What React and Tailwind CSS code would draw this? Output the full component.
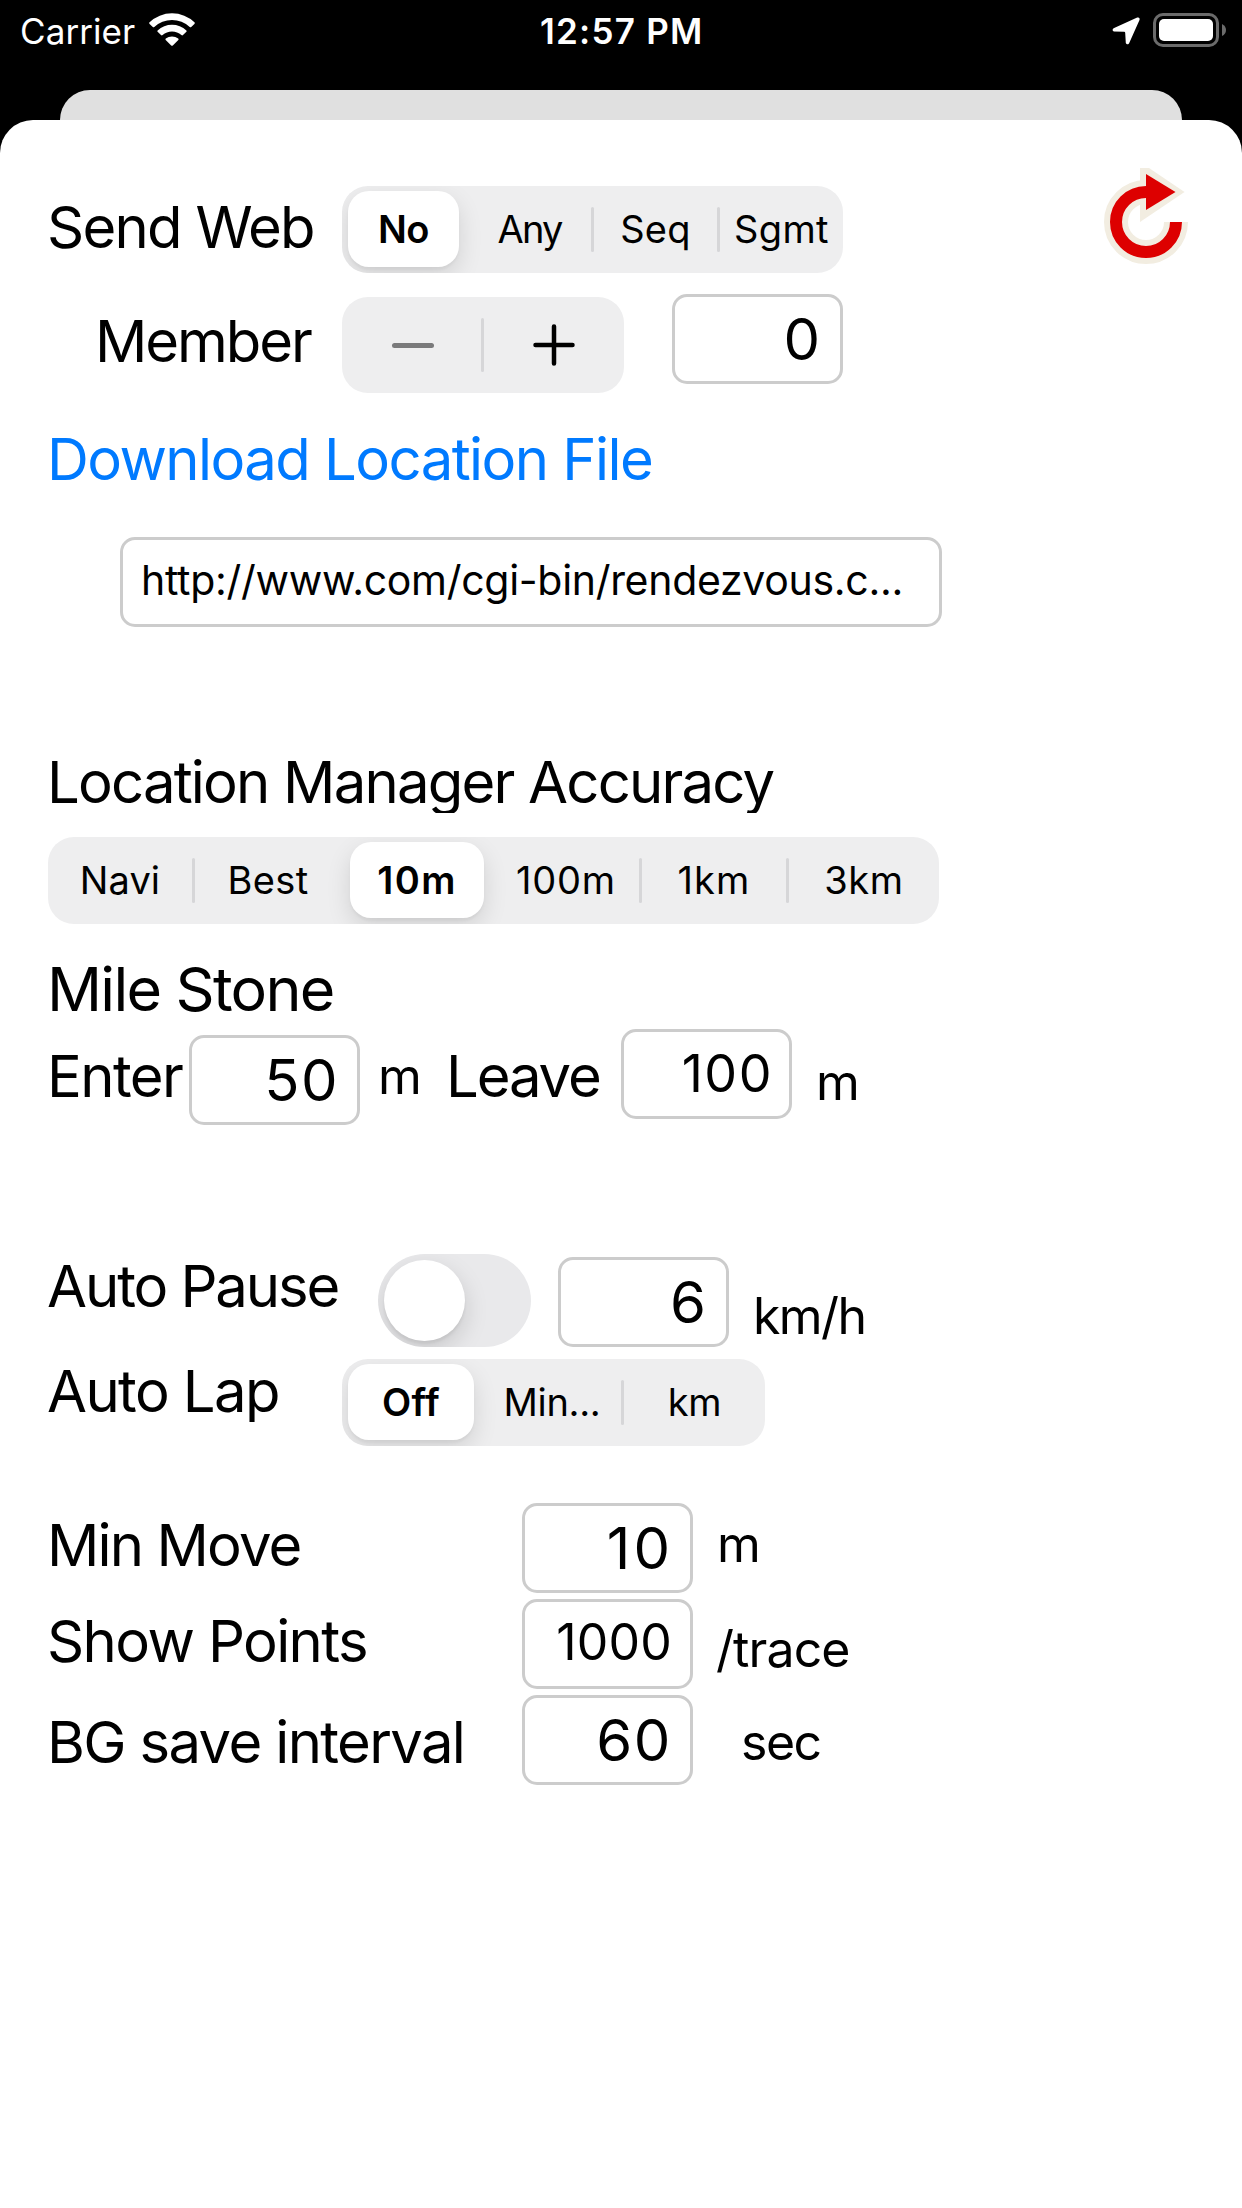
import React from "react";

const LABEL = "shrink-0 whitespace-pre text-[58px] leading-[60px]";
const UNIT = "shrink-0 whitespace-pre text-[50px] leading-[60px]";

function Segmented({ items, selected, className }) {
  return (
    <div className={`flex h-[87px] shrink-0 overflow-hidden rounded-[26px] bg-[#eeeeef] ${className}`}>
      {items.map((item, i) => {
        const isSelected = i === selected;
        const last = i === items.length - 1;
        const divider = !last && !isSelected && i + 1 !== selected;
        return (
          <div key={item.text} className={`flex shrink-0 ${item.width}`}>
            <div className="flex min-w-0 flex-1 items-stretch justify-center px-[6px] pt-[5px] pb-[6px]">
              <div
                className={`flex flex-1 justify-center whitespace-pre text-[38px] leading-[76px] ${item.tracking} ${
                  isSelected
                    ? "rounded-[21px] bg-white font-[560] shadow-[0_9px_24px_rgba(0,0,0,0.12),0_3px_3px_rgba(0,0,0,0.04)]"
                    : ""
                }`}
              >
                {item.text}
              </div>
            </div>
            {!last && (
              <div className={`mt-[21px] h-[45px] w-[3px] shrink-0 rounded-full ${divider ? "bg-[#d6d6d8]" : ""}`} />
            )}
          </div>
        );
      })}
    </div>
  );
}

function Field({ value, className }) {
  return (
    <div
      className={`flex h-[90px] w-[171px] shrink-0 justify-end whitespace-pre rounded-[15px] border-[3px] border-[#cccccc] bg-white ${className}`}
    >
      {value}
    </div>
  );
}

function StatusBar() {
  return (
    <div className="flex h-[90px] justify-between px-[20px] text-[35px] leading-[62px] text-white">
      <div className="flex w-[520px]">
        <span className="w-[129px] tracking-[0.08px]">Carrier</span>
        <svg className="mt-[13px] h-[34px] w-[46px]" viewBox="149 13 46 34" fill="white">
          <path d="M149.3 22.4A33 33 0 0 1 194.7 22.4Q195 23.2 194.4 23.9L191.2 27Q190.4 27.5 189.7 26.9A26 26 0 0 0 154.3 26.9Q153.6 27.5 152.8 27L149.6 23.9Q149 23.2 149.3 22.4Z" />
          <path d="M157.6 30.4A21.3 21.3 0 0 1 186.4 30.4Q187 31.1 186.4 31.8L183 35.1Q182.2 35.7 181.4 35.1A14 14 0 0 0 162.6 35.1Q161.8 35.7 161 35.1L157.6 31.8Q157 31.1 157.6 30.4Z" />
          <path d="M165.8 38.6A10 10 0 0 1 178.2 38.6Q179 39.3 178.3 40L172.8 45.5Q172 46.2 171.2 45.5L165.7 40Q165 39.3 165.8 38.6Z" />
        </svg>
      </div>
      <span className="w-[166px] whitespace-pre font-[560] tracking-[1.25px]">12:57 PM</span>
      <div className="flex w-[516px] justify-end">
        <svg className="mt-[12px] -mr-[5px] h-[36px] w-[116px]" viewBox="1111 12 116 36">
          <path
            d="M1137.2 17.6L1113.6 28.2Q1111.4 30.2 1113.8 31.4L1124.2 31.8Q1125.1 31.9 1125.2 32.8L1125.8 43Q1127 45.4 1129 43.4L1139.5 20Q1140.2 17 1137.2 17.6Z"
            fill="white"
          />
          <rect x="1154.5" y="14.5" width="63" height="31" rx="8.5" fill="none" stroke="#6b6b6b" strokeWidth="3" />
          <rect x="1159" y="19" width="54" height="22" rx="5" fill="white" />
          <path d="M1222 24Q1226 26 1226 30Q1226 34 1222 36Z" fill="#6b6b6b" />
        </svg>
      </div>
    </div>
  );
}

function RefreshIcon() {
  return (
    <svg className="h-[96px] w-[84px] shrink-0" viewBox="1104 168 84 96">
      <g fill="none">
        <path d="M1146 192A30 30 0 1 0 1176 222" stroke="#f2ede1" strokeWidth="24" />
        <path d="M1140 168H1149L1184.5 192L1140 222Z" fill="#f2ede1" />
        <path d="M1146 192A30 30 0 1 0 1176 222" stroke="#dd0000" strokeWidth="12" />
        <path d="M1146 174L1175.5 192L1146 210Z" fill="#dd0000" />
      </g>
    </svg>
  );
}

function Stepper() {
  return (
    <div className="mt-[3px] flex h-[96px] w-[282px] shrink-0 rounded-[26px] bg-[#eeeeef]">
      <div className="flex w-[139px] items-center justify-center pl-[3px]">
        <div className="h-[5px] w-[42px] rounded-full bg-[#7a7a7b]" />
      </div>
      <div className="mt-[21px] h-[54px] w-[3px] rounded-full bg-[#d6d6d8]" />
      <div className="flex w-[140px] items-center justify-center">
        <svg className="h-[42px] w-[42px]" viewBox="0 0 42 42" stroke="black" strokeWidth="4.5" strokeLinecap="round">
          <path d="M2.5 21H39.5M21 2.5V39.5" />
        </svg>
      </div>
    </div>
  );
}

export default function App() {
  return (
    <div className="h-[2208px] w-[1242px] overflow-hidden bg-black font-[Inter,sans-serif] text-black">
      <StatusBar />
      <div className="mx-[60px] h-[30px] rounded-t-[30px] bg-[#e0e0e0]" />
      <div className="flex h-[2088px] flex-col rounded-t-[33px] bg-white pt-[48px]">
        <div className="flex h-[105px] items-start pl-[47px]">
          <span className={`${LABEL} mt-[29px] w-[295px] tracking-[-1.73px]`}>Send Web</span>
          <Segmented
            className="mt-[18px] w-[501px]"
            selected={0}
            items={[
              { text: "No", width: "w-[126px]", tracking: "tracking-[-0.5px]" },
              { text: "Any", width: "w-[126px]", tracking: "tracking-[-1.86px]" },
              { text: "Seq", width: "w-[126px]", tracking: "tracking-[0.23px]" },
              { text: "Sgmt", width: "w-[123px]", tracking: "tracking-[0.34px]" },
            ]}
          />
          <div className="ml-[261px]">
            <RefreshIcon />
          </div>
        </div>

        <div className="mt-[21px] flex h-[99px] items-start pl-[95px]">
          <span className={`${LABEL} mt-[17px] w-[247px] tracking-[-2.07px]`}>Member</span>
          <Stepper />
          <Field value="0" className="ml-[48px] pr-[20px] text-[58px] leading-[84px]" />
        </div>

        <span className={`${LABEL} mt-[36px] ml-[47px] h-[60px] tracking-[-1.56px] text-[#007aff]`}>
          Download Location File
        </span>

        <div className="mt-[48px] ml-[120px] h-[90px] w-[822px] shrink-0 whitespace-pre rounded-[15px] border-[3px] border-[#cccccc] pl-[18px] text-[41px] leading-[80px] tracking-[-0.3px]">
          http://www.com/cgi-bin/rendezvous.c...
        </div>

        <span className={`${LABEL} mt-[125px] ml-[47px] h-[61px] overflow-hidden tracking-[-1.79px]`}>
          Location Manager Accuracy
        </span>

        <Segmented
          className="mt-[24px] ml-[48px] w-[891px]"
          selected={2}
          items={[
            { text: "Navi", width: "w-[147px]", tracking: "tracking-[0.08px]" },
            { text: "Best", width: "w-[149px]", tracking: "tracking-[0.41px]" },
            { text: "10m", width: "w-[149px]", tracking: "tracking-[1.4px]" },
            { text: "100m", width: "w-[149px]", tracking: "tracking-[0.77px]" },
            { text: "1km", width: "w-[147px]", tracking: "tracking-[1.19px]" },
            { text: "3km", width: "w-[150px]", tracking: "tracking-[0.69px]" },
          ]}
        />

        <span className="mt-[35px] ml-[47px] h-[60px] shrink-0 text-[61px] leading-[60px] tracking-[-1.75px]">
          Mile Stone
        </span>

        <div className="mt-[10px] flex h-[96px] items-start pl-[47px]">
          <span className={`${LABEL} mt-[17px] w-[142px] tracking-[-1.59px]`}>Enter</span>
          <Field value="50" className="mt-[6px] pr-[18px] text-[58px] leading-[84px] tracking-[1.44px]" />
          <span className={`${UNIT} mt-[17px] ml-[18px] w-[68px]`}>m</span>
          <span className={`${LABEL} mt-[17px] w-[175px] tracking-[-2.09px]`}>Leave</span>
          <Field value="100" className="pr-[16px] text-[52px] leading-[84px] tracking-[1.52px]" />
          <span className={`${UNIT} mt-[23px] ml-[24px]`}>m</span>
        </div>

        <div className="mt-[129px] flex h-[93px] items-start pl-[47px]">
          <span className={`${LABEL} mt-[2px] w-[331px] tracking-[-2.08px]`}>Auto Pause</span>
          <div className="h-[93px] w-[153px] shrink-0 overflow-hidden rounded-full bg-[#e9e9eb] p-[6px]">
            <div className="h-[81px] w-[81px] rounded-full bg-white shadow-[0_9px_24px_rgba(0,0,0,0.15),0_3px_3px_rgba(0,0,0,0.06)]" />
          </div>
          <Field value="6" className="mt-[3px] ml-[27px] pr-[20px] text-[58px] leading-[84px]" />
          <span className={`${UNIT} mt-[32px] ml-[24px] tracking-[-1.6px]`}>km/h</span>
        </div>

        <div className="mt-[12px] flex h-[87px] items-start pl-[47px]">
          <span className={`${LABEL} mt-[2px] h-[61px] w-[295px] overflow-hidden tracking-[-1.6px]`}>Auto Lap</span>
          <Segmented
            className="w-[423px]"
            selected={0}
            items={[
              { text: "Off", width: "w-[141px]", tracking: "tracking-[0.3px]" },
              { text: "Min...", width: "w-[141px]", tracking: "tracking-[-0.31px]" },
              { text: "km", width: "w-[141px]", tracking: "tracking-[-0.36px]" },
            ]}
          />
        </div>

        <div className="mt-[57px] flex h-[90px] items-start pl-[47px]">
          <span className={`${LABEL} mt-[12px] w-[475px] tracking-[-1.86px]`}>Min Move</span>
          <Field value="10" className="pr-[17px] text-[58px] leading-[84px] tracking-[3px]" />
          <span className={`${UNIT} mt-[11px] ml-[24px]`}>m</span>
        </div>

        <div className="mt-[6px] flex h-[90px] items-start pl-[47px]">
          <span className={`${LABEL} mt-[12px] w-[475px] tracking-[-1.62px]`}>Show Points</span>
          <Field value="1000" className="pr-[18px] text-[50px] leading-[81px] tracking-[0.2px]" />
          <span className={`${UNIT} mt-[20px] ml-[23px] tracking-[-0.9px]`}>/trace</span>
        </div>

        <div className="mt-[6px] flex h-[90px] items-start pl-[47px]">
          <span className={`${LABEL} mt-[17px] w-[475px] tracking-[-1.65px]`}>BG save interval</span>
          <Field value="60" className="pr-[18px] text-[58px] leading-[84px] tracking-[1.6px]" />
          <span className={`${UNIT} mt-[17px] ml-[48px] tracking-[-1.5px]`}>sec</span>
        </div>
      </div>
    </div>
  );
}
